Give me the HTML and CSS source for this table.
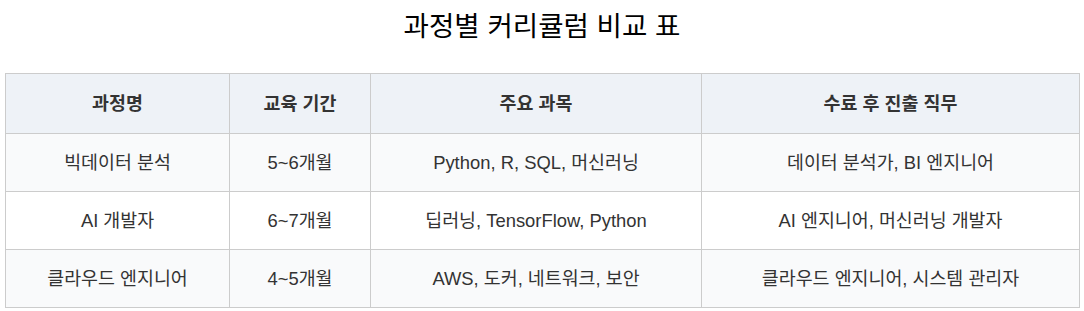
FILE: index.html
```html
<!DOCTYPE html>
<html lang="ko">
<head>
<meta charset="utf-8">
<title>과정별 커리큘럼 비교 표</title>
<link rel="stylesheet" href="styles.css">
</head>
<body>
<h2 class="title">과정별 커리큘럼 비교 표</h2>
<table class="cmp">
  <colgroup>
    <col class="c1"><col class="c2"><col class="c3"><col class="c4">
  </colgroup>
  <thead>
    <tr><th>과정명</th><th>교육 기간</th><th>주요 과목</th><th>수료 후 진출 직무</th></tr>
  </thead>
  <tbody>
    <tr class="alt"><td>빅데이터 분석</td><td>5~6개월</td><td>Python, R, SQL, 머신러닝</td><td>데이터 분석가, BI 엔지니어</td></tr>
    <tr><td>AI 개발자</td><td>6~7개월</td><td>딥러닝, TensorFlow, Python</td><td>AI 엔지니어, 머신러닝 개발자</td></tr>
    <tr class="alt"><td>클라우드 엔지니어</td><td>4~5개월</td><td>AWS, 도커, 네트워크, 보안</td><td>클라우드 엔지니어, 시스템 관리자</td></tr>
  </tbody>
</table>
</body>
</html>
```
FILE: styles.css
```css
html, body { margin: 0; padding: 0; background: #fff; }
body {
  padding: 0 5px;
  font-family: "Liberation Sans", Arial, "Noto Sans CJK KR", sans-serif;
  color: #333;
}
.title {
  margin: 10px 0 0;
  height: 63px;
  font-size: 27.6px;
  font-weight: 400;
  line-height: 34px;
  text-align: center;
  color: #000;
}
.cmp {
  width: 100%;
  border-collapse: collapse;
  table-layout: fixed;
  font-size: 18.4px;
}
.c1 { width: 224px; }
.c2 { width: 141px; }
.c3 { width: 331px; }
.c4 { width: 378px; }
.cmp th, .cmp td {
  border: 1px solid #ccc;
  text-align: center;
  line-height: 24px;
}
.cmp th {
  background: #eef2f7;
  font-weight: 700;
  padding: 17.5px 8px;
}
.cmp td {
  padding: 16.5px 8px;
}
.cmp tr.alt td { background: #f9fafb; }
```
